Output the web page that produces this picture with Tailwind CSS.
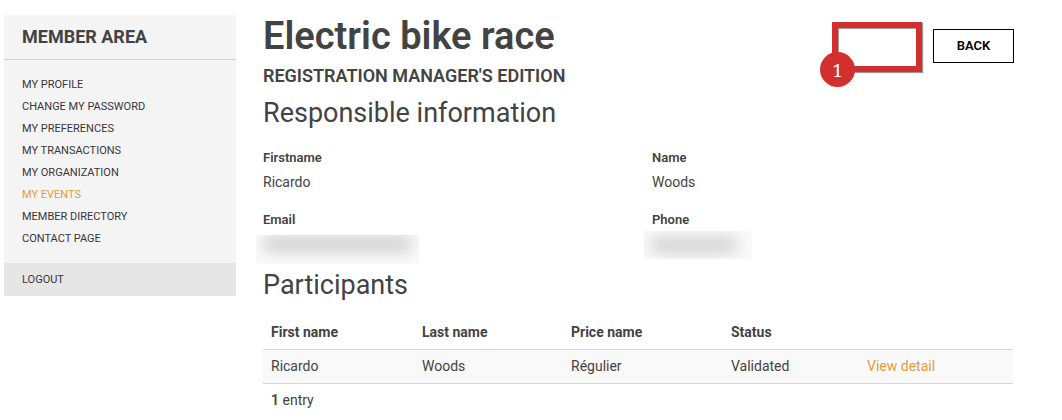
<!DOCTYPE html>
<html lang="en">
<head>
<meta charset="utf-8">
<meta name="viewport" content="width=device-width, initial-scale=1">
<title>Electric bike race</title>
<script src="https://cdn.jsdelivr.net/npm/@tailwindcss/browser@4"></script>
</head>
<body class="bg-white font-[Roboto,sans-serif] text-sm text-[#434343]">
<div class="flex items-start gap-[27px] pl-1 pr-[49px] pt-[15px]">
  <aside class="w-[232px] shrink-0 bg-[#f4f4f4]">
    <h2 class="border-b border-[#d2d2d2] px-[18px] pt-2 pb-2 text-lg font-bold">MEMBER AREA</h2>
    <nav class="text-[11px] leading-[22px] text-[#38343c]">
      <ul class="px-[18px] pt-[14px] pb-[13px]">
        <li><a href="#">MY PROFILE</a></li>
        <li><a href="#">CHANGE MY PASSWORD</a></li>
        <li><a href="#">MY PREFERENCES</a></li>
        <li><a href="#">MY TRANSACTIONS</a></li>
        <li><a href="#">MY ORGANIZATION</a></li>
        <li><a href="#" class="text-[#e59c3c]" aria-current="page">MY EVENTS</a></li>
        <li><a href="#">MEMBER DIRECTORY</a></li>
        <li><a href="#">CONTACT PAGE</a></li>
      </ul>
      <a href="#" class="block bg-[#e6e6e6] px-[18px] pt-[6px] pb-[5px]">LOGOUT</a>
    </nav>
  </aside>
  <main class="min-w-0 flex-1">
    <header class="flex items-start justify-between">
      <div>
        <h1 class="text-[38px] leading-[42px] font-semibold">Electric bike race</h1>
        <p class="pt-[7px] text-lg leading-6 font-semibold">REGISTRATION MANAGER'S EDITION</p>
      </div>
      <div class="-mr-px flex items-start gap-[11px] pt-[7px]">
        <div class="relative h-[50px] w-[90px] border-6 border-[#d32f2f] shadow-[1px_1px_1px_#999,inset_1px_1px_1px_#999]">
          <span class="absolute -bottom-[21px] -left-[18px] flex size-[35px] items-center justify-center rounded-full bg-[#d32f2f] font-['Noto_Serif','Liberation_Serif',serif] text-lg text-white">1</span>
        </div>
        <button type="button" class="mt-[7px] h-[34px] w-[81px] border border-black text-[13px] font-semibold text-black">BACK</button>
      </div>
    </header>
    <section>
      <h2 class="pt-[9px] text-[27px] leading-8">Responsible information</h2>
      <dl class="grid grid-cols-[389px_1fr] pt-[19px]">
        <div class="h-[62px]">
          <dt class="text-[13px] leading-5 font-semibold">Firstname</dt>
          <dd class="pt-[2px] leading-6">Ricardo</dd>
        </div>
        <div class="h-[62px]">
          <dt class="text-[13px] leading-5 font-semibold">Name</dt>
          <dd class="pt-[2px] leading-6">Woods</dd>
        </div>
        <div>
          <dt class="text-[13px] leading-5 font-semibold">Email</dt>
          <dd class="mt-[5px] -ml-[7px] h-[29px] w-[163px] overflow-hidden bg-[#fafafa] px-2 pt-[3px]" aria-label="Hidden email">
            <div class="h-3 bg-[#c4c2c4] blur-[8px]"></div>
          </dd>
        </div>
        <div>
          <dt class="text-[13px] leading-5 font-semibold">Phone</dt>
          <dd class="mt-[1px] -ml-2 h-7 w-[108px] overflow-hidden bg-[#fafafa] pr-4 pl-2 pt-2" aria-label="Hidden phone">
            <div class="h-3 bg-[#c4c4c4] blur-[8px]"></div>
          </dd>
        </div>
      </dl>
    </section>
    <section>
      <h2 class="pt-[5px] text-[27px] leading-8">Participants</h2>
      <table class="mt-[14px] w-full table-fixed border-collapse text-left">
        <colgroup><col class="w-[151px]"><col class="w-[149px]"><col class="w-[160px]"><col class="w-[136px]"><col></colgroup>
        <thead>
          <tr class="h-[34px] border-b border-[#d8d8d8] font-semibold">
            <th scope="col" class="px-2">First name</th>
            <th scope="col" class="px-2">Last name</th>
            <th scope="col" class="px-2">Price name</th>
            <th scope="col" class="px-2">Status</th>
            <td></td>
          </tr>
        </thead>
        <tbody>
          <tr class="h-[34px] border-b border-[#d8d8d8] bg-[#f9f9f9]">
            <td class="px-2">Ricardo</td>
            <td class="px-2">Woods</td>
            <td class="px-2">Régulier</td>
            <td class="px-2">Validated</td>
            <td class="px-2"><a href="#" class="text-[#e59c3c]">View detail</a></td>
          </tr>
        </tbody>
      </table>
      <p class="px-2 pt-[6px]"><b class="font-semibold">1</b> entry</p>
    </section>
  </main>
</div>
</body>
</html>
